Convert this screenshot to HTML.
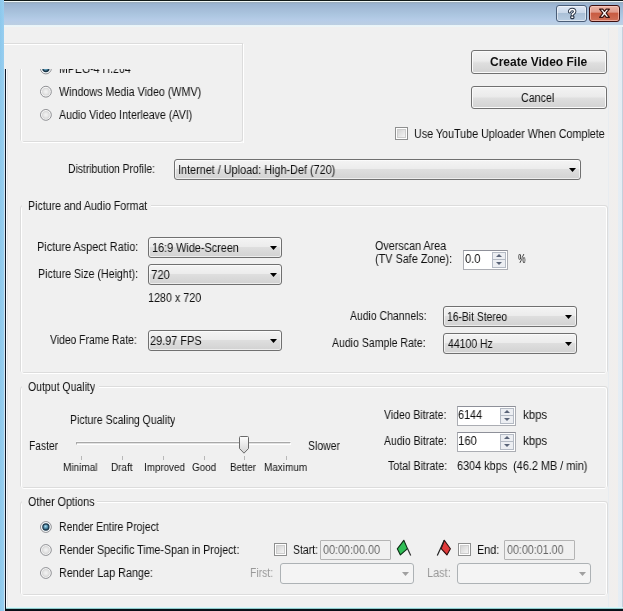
<!DOCTYPE html>
<html><head><meta charset="utf-8">
<style>

*{margin:0;padding:0;box-sizing:border-box}
html,body{width:623px;height:611px;overflow:hidden;background:#f0f0f0;position:relative;font-family:"Liberation Sans",sans-serif}
.a{position:absolute}
.t{position:absolute;font-size:12px;line-height:14px;white-space:nowrap;transform:scaleX(.875);transform-origin:0 0;color:#101010;will-change:transform}
.b{font-weight:bold;transform:none}
.g{color:#666}
.g2{color:#999}
.sm{font-size:10.5px}
.grp{position:absolute;border:1px solid #dcdcdc;border-radius:3px}
.grpw{position:absolute;border:1px solid #fff;border-radius:3px}
.combo{position:absolute;border:1px solid #707070;border-radius:3px;background:linear-gradient(#f4f4f4 0,#ececec 45%,#dedede 50%,#d2d2d2 100%);box-shadow:inset 0 0 0 1px rgba(255,255,255,.6)}
.combo:after{content:"";position:absolute;right:4px;top:8px;width:7px;height:4px;background:#000;clip-path:polygon(0 0,100% 0,50% 100%)}
.combo.dis{border-color:#adb2b5;background:#f4f4f4;box-shadow:none}
.combo.dis:after{background:#a0a0a0}
.btn{position:absolute;border:1px solid #707070;border-radius:3px;background:linear-gradient(#f3f3f3 0,#ebebeb 45%,#dedede 55%,#d2d2d2 100%);box-shadow:inset 0 0 0 1px #fafafa}
.spin{position:absolute;border:1px solid #abadb3;border-top-color:#8e9099;background:#fff}
.sb{position:absolute;right:1px;width:14px;border:1px solid #b4bac4;background:#eceef2}
.up:after,.dn:after{content:"";position:absolute;left:3px;border-left:3px solid transparent;border-right:3px solid transparent}
.up:after{top:1px;border-bottom:3px solid #5a6478}
.dn:after{top:2px;border-top:3px solid #5a6478}
.chk{position:absolute;width:13px;height:13px;border:1px solid #8e8f8f;background:#fff}
.chk:after{content:"";position:absolute;left:1px;top:1px;width:7px;height:7px;border:1px solid #cdcdcd;background:linear-gradient(135deg,#d4d4d4,#f4f4f4)}
.rad{position:absolute;width:12px;height:12px;border-radius:50%;border:1px solid #8c8c8c;background:radial-gradient(circle at 50% 50%,#e4e4e4 0,#ececec 40%,#fafafa 70%,#fff 100%)}
.rad.on{background:radial-gradient(circle at 45% 40%,#9ad0e8 0,#5a9ab8 25%,#1c3a50 45%,#203848 55%,#e8f4fc 62%,#fff 100%)}
.tb{position:absolute;border:1px solid #b4b4b4;background:#f0f0f0;border-radius:1px}

</style></head><body>
<svg width="0" height="0" style="position:absolute"><defs><radialGradient id="rg" cx="45%" cy="40%" r="60%"><stop offset="0" stop-color="#a8dcf0"/><stop offset=".55" stop-color="#4e8aa8"/><stop offset="1" stop-color="#203c50"/></radialGradient><radialGradient id="ug" cx="50%" cy="50%" r="50%"><stop offset="0" stop-color="#f4f4f4"/><stop offset=".6" stop-color="#e6e6e6"/><stop offset="1" stop-color="#d4d4d4"/></radialGradient></defs></svg>

<!-- window frame -->
<div class="a" style="left:0;top:0;width:4px;height:611px;background:linear-gradient(90deg,#8cc8ec,#98cef0)"></div>
<div class="a" style="left:4px;top:0;width:619px;height:1px;background:#101818"></div>
<div class="a" style="left:4px;top:1px;width:619px;height:26px;background:linear-gradient(#f0f8f8 0,#f0f8f8 1px,#9aaab8 1px,#9ab4d2 3px,#a4bcd8 8px,#acc6e0 14px,#b6cce8 19px,#bccfe2 24px,#e8f4f8 24px,#eef6f8 26px)"></div>
<!-- right frame strip -->
<div class="a" style="left:608px;top:27px;width:15px;height:580px;background:linear-gradient(90deg,#e8ecf0 0,#e8ecf0 1px,#f0efee 1px,#f1efed 10px,#e6eef4 10px,#e4ecf4 14px,#c4d0dc 14px)"></div>
<!-- left inner frame below y=69 -->
<div class="a" style="left:4px;top:69px;width:1px;height:542px;background:#cfe4f2"></div>
<div class="a" style="left:5px;top:69px;width:1px;height:542px;background:#101828"></div>
<div class="a" style="left:6px;top:69px;width:1px;height:538px;background:#fafcff"></div>
<div class="a" style="left:7px;top:69px;width:1px;height:538px;background:#e2e4e6"></div>
<!-- bottom frame -->
<div class="a" style="left:6px;top:607px;width:617px;height:1px;background:#d8f8fc"></div>
<div class="a" style="left:6px;top:608px;width:617px;height:1px;background:#90c8c8"></div>
<div class="a" style="left:5px;top:609px;width:618px;height:2px;background:#081018"></div>

<!-- title buttons -->
<div class="a" style="left:556px;top:5px;width:31px;height:17px;border:1px solid #4a5e78;border-radius:3px;background:linear-gradient(#dfe8f4 0,#cad8ea 44%,#a9bfd6 47%,#b9cde2 100%);box-shadow:inset 0 0 0 1px rgba(255,255,255,.5)"></div>
<svg class="a" style="left:556px;top:5px" width="31" height="17"><path d="M13.6 6.8 C13.6 5.2 14.8 4.5 16.2 4.5 C17.7 4.5 18.7 5.3 18.7 6.6 C18.7 7.9 17.5 8.3 16.4 9.2 L16.3 9.9" fill="none" stroke="#2a3648" stroke-width="3.4" stroke-linecap="round" stroke-linejoin="round"/><path d="M13.6 6.8 C13.6 5.2 14.8 4.5 16.2 4.5 C17.7 4.5 18.7 5.3 18.7 6.6 C18.7 7.9 17.5 8.3 16.4 9.2 L16.3 9.9" fill="none" stroke="#fff" stroke-width="1.5" stroke-linecap="round" stroke-linejoin="round"/><rect x="14.7" y="11" width="3.2" height="2.6" rx=".8" fill="#fff" stroke="#2a3648" stroke-width="1.2"/></svg>
<div class="a" style="left:589px;top:5px;width:31px;height:17px;border:1px solid #3c0e0e;border-radius:3px;background:linear-gradient(#ecb4a6 0,#e09a8a 42%,#c85a40 46%,#d07058 100%);box-shadow:inset 0 0 0 1px rgba(255,210,200,.6)"></div>
<svg class="a" style="left:589px;top:5px" width="31" height="17"><path d="M10.6 4.2 L13.8 4.2 L15.5 6.3 L17.2 4.2 L20.4 4.2 L17.1 8.2 L20.4 12.3 L17.2 12.3 L15.5 10.1 L13.8 12.3 L10.6 12.3 L13.9 8.2 Z" fill="#fff" stroke="#3a1410" stroke-width="1.2" stroke-linejoin="round"/></svg>

<!-- group 1 (clipped) -->
<div class="a" style="left:4px;top:43px;width:239px;height:1px;background:#dcdcdc"></div>
<div class="a" style="left:4px;top:44px;width:240px;height:1px;background:#fff"></div>
<div class="a" style="left:242px;top:43px;width:1px;height:99px;background:#dcdcdc"></div>
<div class="a" style="left:243px;top:44px;width:1px;height:99px;background:#fff"></div>
<div class="a" style="left:7px;top:69px;width:236px;height:74px;overflow:hidden">
  <div class="grp" style="left:13px;top:-30px;width:223px;height:103px"></div>
  <div class="grpw" style="left:14px;top:-29px;width:223px;height:103px"></div>
  <svg class="a" style="left:32px;top:-7px" width="14" height="15"><circle cx="6.9" cy="6.5" r="5.4" fill="#fbfbfb" stroke="#8d8e92" stroke-width="1"/><circle cx="6.9" cy="6.5" r="4.4" fill="#eef6fb"/><circle cx="6.9" cy="6.5" r="3.1" fill="url(#rg)" stroke="#1a3446" stroke-width="1.1"/></svg>
  <div class="t" style="left:52.12px;top:-7px;transform:scaleX(0.8812)">MPEG-4 H.264</div>
</div>
<svg class="a" style="left:39px;top:84px" width="14" height="15"><circle cx="6.9" cy="7.7" r="5.4" fill="#fbfbfb" stroke="#8d8e92" stroke-width="1"/><circle cx="6.9" cy="7.7" r="3.9" fill="url(#ug)"/></svg>
<svg class="a" style="left:39px;top:107px" width="14" height="15"><circle cx="6.9" cy="7.9" r="5.4" fill="#fbfbfb" stroke="#8d8e92" stroke-width="1"/><circle cx="6.9" cy="7.9" r="3.9" fill="url(#ug)"/></svg>

<!-- buttons -->
<div class="btn" style="left:471px;top:50px;width:136px;height:24px"></div>
<div class="btn" style="left:471px;top:86px;width:136px;height:23px"></div>
<div class="chk" style="left:395px;top:127px"></div>

<!-- distribution -->
<div class="combo" style="left:174px;top:159px;width:407px;height:21px"></div>

<!-- group 2 -->
<div class="grp" style="left:20px;top:205px;width:588px;height:168px"></div>
<div class="grpw" style="left:21px;top:206px;width:586px;height:168px"></div>
<div class="a" style="left:22px;top:200px;width:129px;height:12px;background:#f0f0f0"></div>
<div class="combo" style="left:148px;top:237px;width:134px;height:21px"></div>
<div class="combo" style="left:148px;top:264px;width:134px;height:21px"></div>
<div class="combo" style="left:148px;top:330px;width:134px;height:21px"></div>

<div class="spin" style="left:463px;top:250px;width:45px;height:20px"><div class="sb up" style="top:1px;height:8px"></div><div class="sb dn" style="top:8px;height:9px"></div></div>

<div class="combo" style="left:443px;top:306px;width:134px;height:21px"></div>
<div class="combo" style="left:443px;top:333px;width:134px;height:21px"></div>

<!-- group 3 -->
<div class="grp" style="left:20px;top:386px;width:588px;height:102px"></div>
<div class="grpw" style="left:21px;top:387px;width:586px;height:102px"></div>
<div class="a" style="left:22px;top:380px;width:77px;height:12px;background:#f0f0f0"></div>
<!-- slider track -->
<div class="a" style="left:76px;top:442px;width:215px;height:3px;border:1px solid #a8a8a8;border-right-color:#fff;border-bottom-color:#fff;background:#e2e2e2"></div><div class="a" style="left:76px;top:441px;width:215px;height:1px;background:#f8f8f8"></div>
<!-- ticks -->
<div class="a" style="left:81px;top:456px;width:1px;height:4px;background:#b8b8b8"></div>
<div class="a" style="left:122px;top:456px;width:1px;height:4px;background:#b8b8b8"></div>
<div class="a" style="left:163px;top:456px;width:1px;height:4px;background:#b8b8b8"></div>
<div class="a" style="left:204px;top:456px;width:1px;height:4px;background:#b8b8b8"></div>
<div class="a" style="left:244px;top:456px;width:1px;height:4px;background:#b8b8b8"></div>
<div class="a" style="left:286px;top:456px;width:1px;height:4px;background:#b8b8b8"></div>
<!-- thumb -->
<svg class="a" style="left:238px;top:435px" width="13" height="20"><defs><linearGradient id="tg" x1="0" y1="0" x2="0" y2="1"><stop offset="0" stop-color="#fdfdfd"/><stop offset="1" stop-color="#d4d4d4"/></linearGradient></defs><path d="M1.5 2.5 Q1.5 1.5 2.5 1.5 L9.5 1.5 Q10.5 1.5 10.5 2.5 L10.5 13.5 L6 18.2 L1.5 13.5 Z" fill="url(#tg)" stroke="#6a6a6a"/></svg>

<div class="spin" style="left:457px;top:406px;width:59px;height:20px"><div class="sb up" style="top:1px;height:8px"></div><div class="sb dn" style="top:8px;height:9px"></div></div>
<div class="spin" style="left:457px;top:432px;width:59px;height:20px"><div class="sb up" style="top:1px;height:8px"></div><div class="sb dn" style="top:8px;height:9px"></div></div>

<!-- group 4 -->
<div class="grp" style="left:20px;top:501px;width:588px;height:94px"></div>
<div class="grpw" style="left:21px;top:502px;width:586px;height:94px"></div>
<div class="a" style="left:22px;top:495px;width:75px;height:12px;background:#f0f0f0"></div>
<svg class="a" style="left:39px;top:520px" width="14" height="15"><circle cx="6.9" cy="7" r="5.4" fill="#fbfbfb" stroke="#8d8e92" stroke-width="1"/><circle cx="6.9" cy="7" r="4.4" fill="#eef6fb"/><circle cx="6.9" cy="7" r="3.1" fill="url(#rg)" stroke="#1a3446" stroke-width="1.1"/></svg>
<svg class="a" style="left:39px;top:543px" width="14" height="15"><circle cx="6.9" cy="7" r="5.4" fill="#fbfbfb" stroke="#8d8e92" stroke-width="1"/><circle cx="6.9" cy="7" r="3.9" fill="url(#ug)"/></svg>
<svg class="a" style="left:39px;top:566px" width="14" height="15"><circle cx="6.9" cy="7" r="5.4" fill="#fbfbfb" stroke="#8d8e92" stroke-width="1"/><circle cx="6.9" cy="7" r="3.9" fill="url(#ug)"/></svg>

<div class="chk" style="left:274px;top:543px"></div>
<svg class="a" style="left:392px;top:536px" width="24" height="24"><path d="M11.8 4.3 L15.5 12.6 L8.4 18.9 L5.3 12.8 Z" fill="#2fbf55" stroke="#0c2c14" stroke-width="1.1" stroke-linejoin="round"/><path d="M15.5 12.6 L18.7 19.4" stroke="#303030" stroke-width="1.2"/></svg>
<svg class="a" style="left:430px;top:536px" width="24" height="24"><path d="M14.3 4.3 L20.4 12.8 L16.9 18.9 L11.2 12.6 Z" fill="#e03a3a" stroke="#2c0c0c" stroke-width="1.1" stroke-linejoin="round"/><path d="M14.3 4.3 L7.3 19.4" stroke="#202020" stroke-width="1.2"/></svg>
<div class="tb" style="left:320px;top:540px;width:71px;height:20px"></div>
<div class="chk" style="left:458px;top:543px"></div>
<div class="tb" style="left:504px;top:540px;width:71px;height:20px"></div>

<div class="combo dis" style="left:280px;top:563px;width:134px;height:21px"></div>
<div class="combo dis" style="left:457px;top:563px;width:134px;height:21px"></div>

<div class="t " style="left:59.00px;top:85px;transform:scaleX(0.8931)">Windows Media Video (WMV)</div>
<div class="t " style="left:59.00px;top:108px;transform:scaleX(0.8867)">Audio Video Interleave (AVI)</div>
<div class="t b" style="left:490.00px;top:55px;transform:scaleX(1.0000)">Create Video File</div>
<div class="t " style="left:521.11px;top:91px;transform:scaleX(0.8889)">Cancel</div>
<div class="t " style="left:413.60px;top:127px;transform:scaleX(0.8953)">Use YouTube Uploader When Complete</div>
<div class="t " style="left:67.64px;top:162px;transform:scaleX(0.8636)">Distribution Profile:</div>
<div class="t " style="left:177.80px;top:163px;transform:scaleX(0.9035)">Internet / Upload: High-Def (720)</div>
<div class="t " style="left:28.42px;top:199px;transform:scaleX(0.8806)">Picture and Audio Format</div>
<div class="t " style="left:37.49px;top:240px;transform:scaleX(0.9092)">Picture Aspect Ratio:</div>
<div class="t " style="left:151.60px;top:241px;transform:scaleX(0.9043)">16:9 Wide-Screen</div>
<div class="t " style="left:37.52px;top:267px;transform:scaleX(0.8829)">Picture Size (Height):</div>
<div class="t " style="left:151.05px;top:268px;transform:scaleX(0.9474)">720</div>
<div class="t " style="left:148.10px;top:291px;transform:scaleX(0.8966)">1280 x 720</div>
<div class="t " style="left:50.00px;top:333px;transform:scaleX(0.8630)">Video Frame Rate:</div>
<div class="t " style="left:150.09px;top:334px;transform:scaleX(0.9091)">29.97 FPS</div>
<div class="t " style="left:374.90px;top:239px;transform:scaleX(0.8962)">Overscan Area</div>
<div class="t " style="left:374.90px;top:252px;transform:scaleX(0.9036)">(TV Safe Zone):</div>
<div class="t " style="left:465.00px;top:252px;transform:scaleX(0.9250)">0.0</div>
<div class="t " style="left:517.80px;top:252px;transform:scaleX(0.7200)">%</div>
<div class="t " style="left:349.60px;top:309px;transform:scaleX(0.8690)">Audio Channels:</div>
<div class="t " style="left:447.14px;top:310px;transform:scaleX(0.8594)">16-Bit Stereo</div>
<div class="t " style="left:332.30px;top:336px;transform:scaleX(0.8764)">Audio Sample Rate:</div>
<div class="t " style="left:448.00px;top:337px;transform:scaleX(0.8725)">44100 Hz</div>
<div class="t " style="left:27.93px;top:380px;transform:scaleX(0.8750)">Output Quality</div>
<div class="t " style="left:69.83px;top:413px;transform:scaleX(0.8717)">Picture Scaling Quality</div>
<div class="t " style="left:28.95px;top:439px;transform:scaleX(0.8545)">Faster</div>
<div class="t " style="left:307.83px;top:439px;transform:scaleX(0.8694)">Slower</div>
<div class="t sm" style="left:63.25px;top:460px;transform:scaleX(0.9543)">Minimal</div>
<div class="t sm" style="left:111.25px;top:460px;transform:scaleX(0.9455)">Draft</div>
<div class="t sm" style="left:143.76px;top:460px;transform:scaleX(0.9357)">Improved</div>
<div class="t sm" style="left:191.76px;top:460px;transform:scaleX(0.9417)">Good</div>
<div class="t sm" style="left:230.17px;top:460px;transform:scaleX(0.9296)">Better</div>
<div class="t sm" style="left:264.35px;top:460px;transform:scaleX(0.9477)">Maximum</div>
<div class="t " style="left:384.30px;top:408px;transform:scaleX(0.8690)">Video Bitrate:</div>
<div class="t " style="left:458.30px;top:408px;transform:scaleX(0.9038)">6144</div>
<div class="t " style="left:523.25px;top:408px;transform:scaleX(0.9542)">kbps</div>
<div class="t " style="left:384.30px;top:434px;transform:scaleX(0.8690)">Audio Bitrate:</div>
<div class="t " style="left:458.05px;top:434px;transform:scaleX(0.9474)">160</div>
<div class="t " style="left:523.25px;top:434px;transform:scaleX(0.9542)">kbps</div>
<div class="t " style="left:387.70px;top:459px;transform:scaleX(0.8864)">Total Bitrate:</div>
<div class="t " style="left:456.60px;top:459px;transform:scaleX(0.9049)">6304 kbps&nbsp; (46.2 MB / min)</div>
<div class="t " style="left:27.91px;top:495px;transform:scaleX(0.8904)">Other Options</div>
<div class="t " style="left:58.83px;top:520px;transform:scaleX(0.8693)">Render Entire Project</div>
<div class="t " style="left:58.81px;top:543px;transform:scaleX(0.8896)">Render Specific Time-Span in Project:</div>
<div class="t " style="left:58.80px;top:566px;transform:scaleX(0.8961)">Render Lap Range:</div>
<div class="t " style="left:292.83px;top:543px;transform:scaleX(0.8704)">Start:</div>
<div class="t g" style="left:323.30px;top:543px;transform:scaleX(0.9000)">00:00:00.00</div>
<div class="t " style="left:476.70px;top:543px;transform:scaleX(0.9000)">End:</div>
<div class="t g" style="left:507.30px;top:543px;transform:scaleX(0.8921)">00:00:01.00</div>
<div class="t g2" style="left:250.14px;top:566px;transform:scaleX(0.8640)">First:</div>
<div class="t g2" style="left:426.59px;top:566px;transform:scaleX(0.9125)">Last:</div>
</body></html>
